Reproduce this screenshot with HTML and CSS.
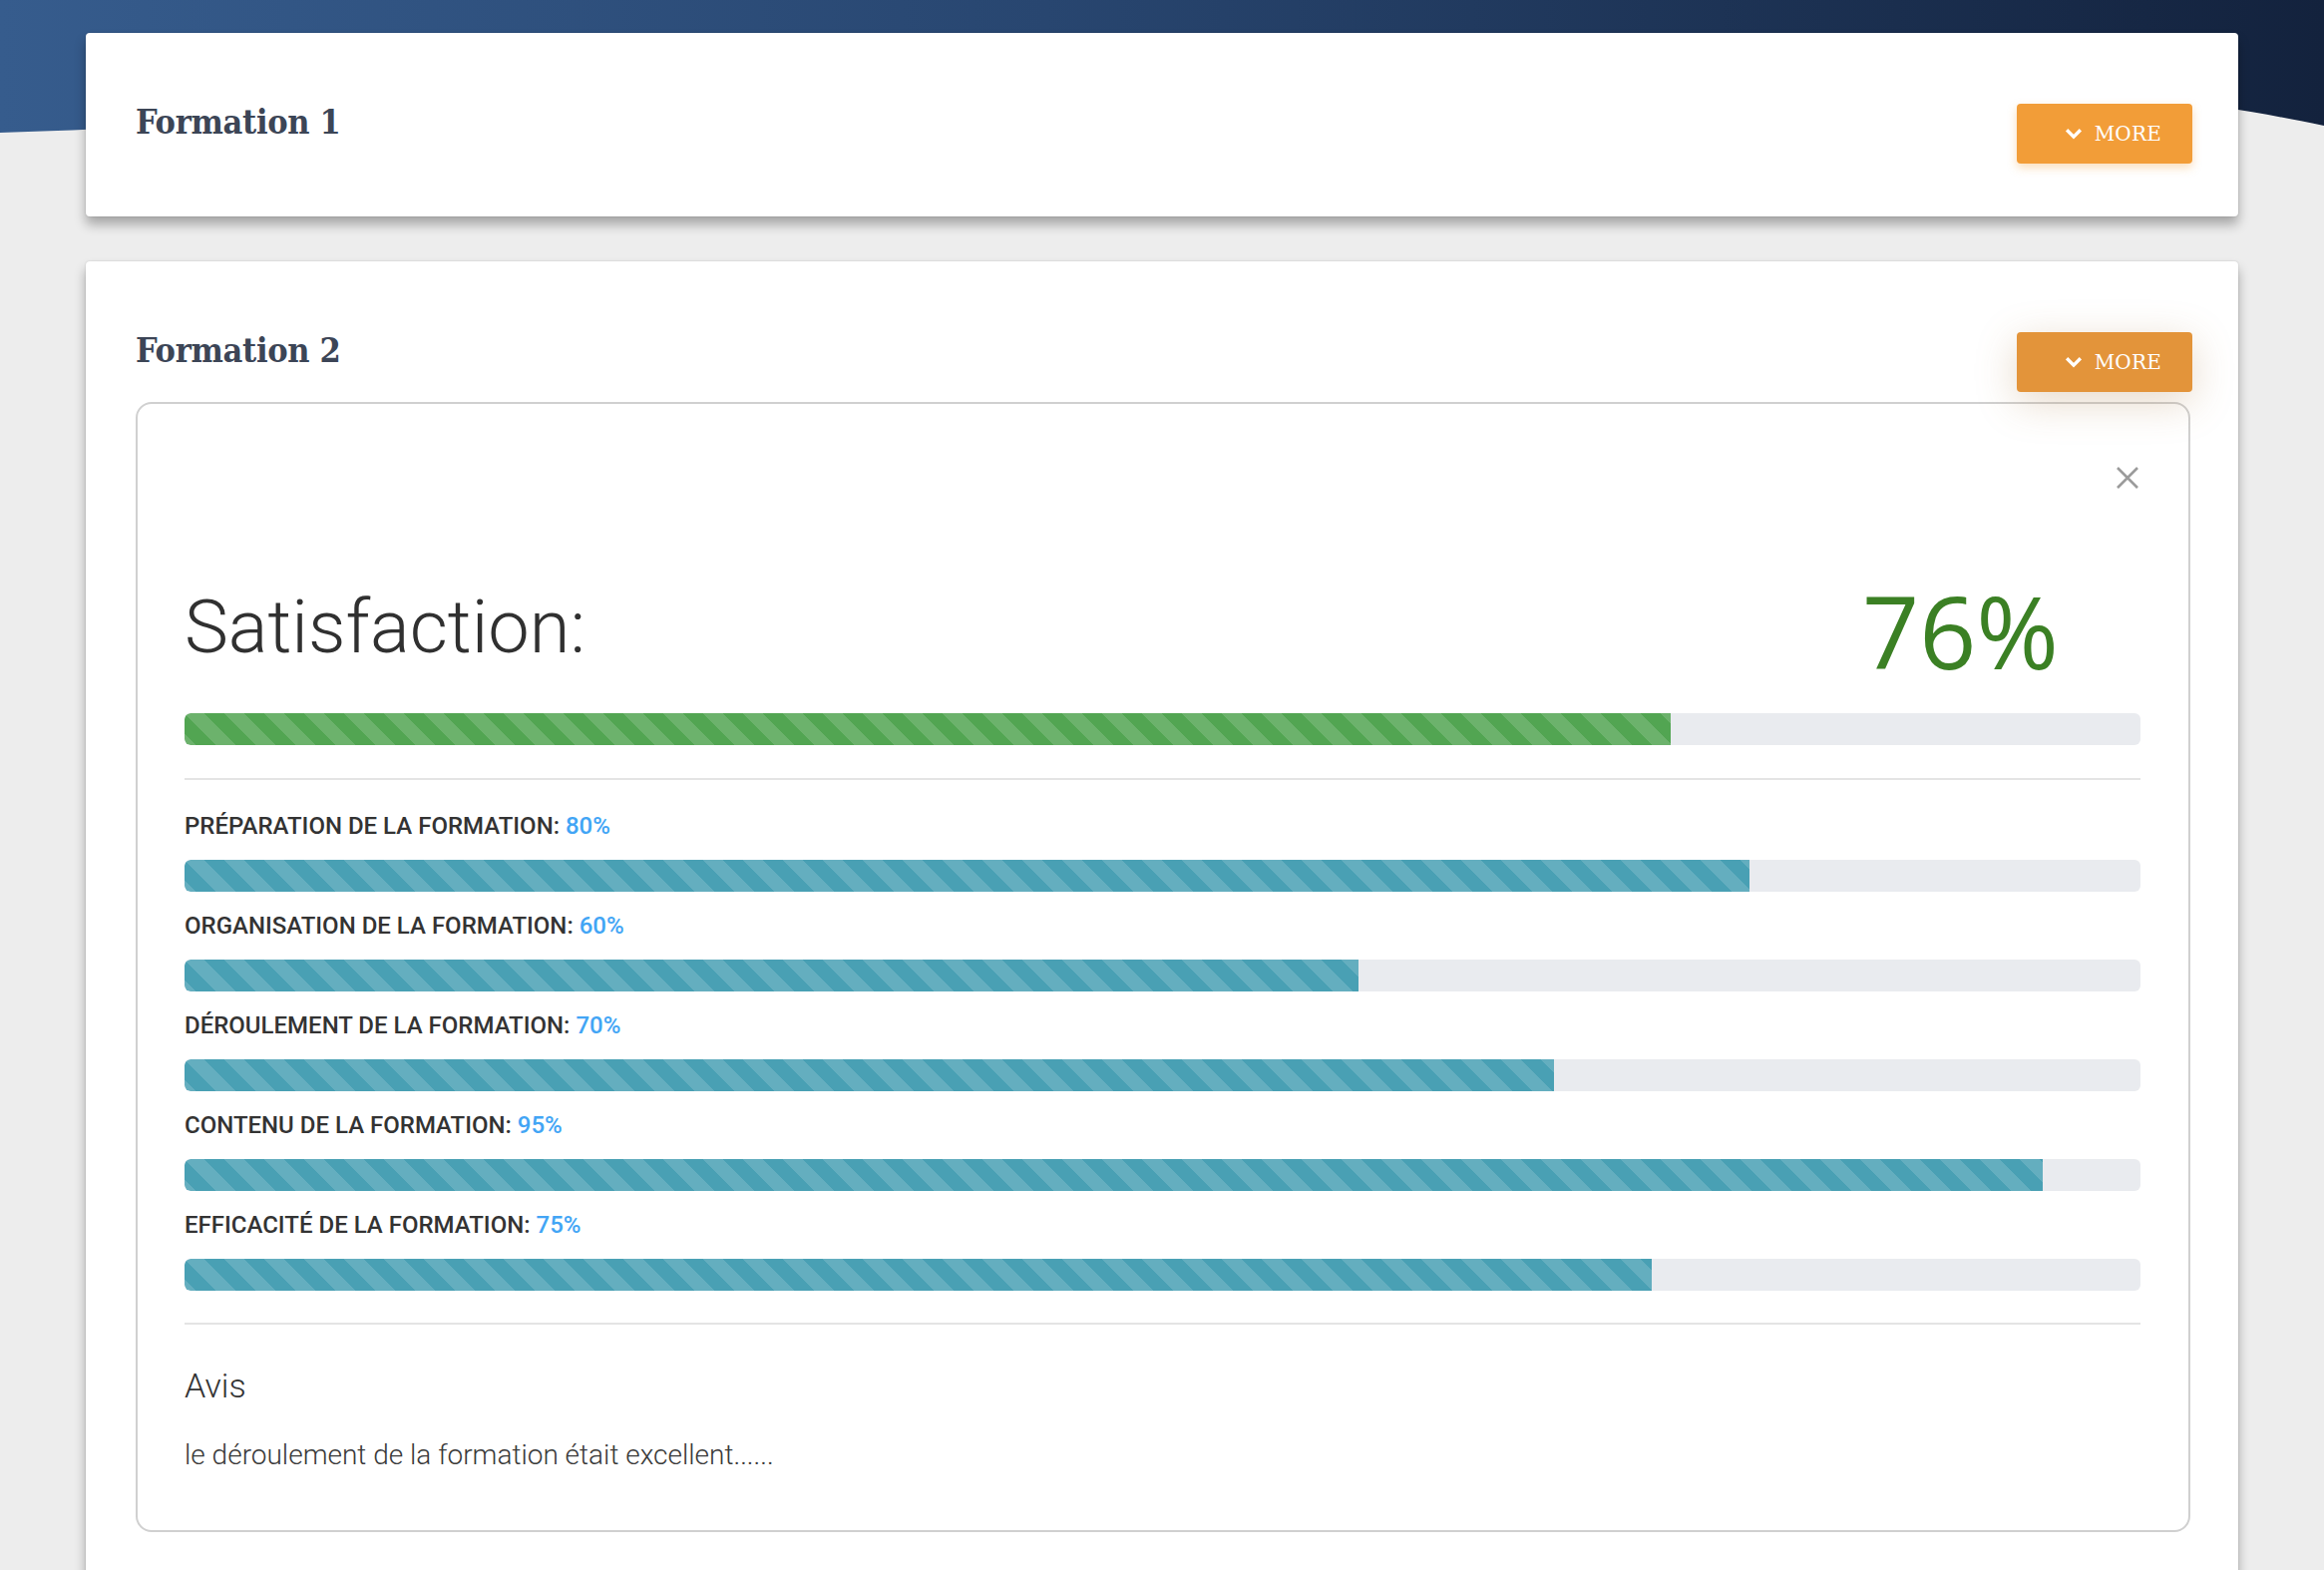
FILE: index.html
```html
<!DOCTYPE html>
<html lang="fr">
<head>
<meta charset="utf-8">
<title>Formations</title>
<link rel="stylesheet" href="styles.css">
</head>
<body>
<div class="hero">
  <svg class="hero-svg" width="2330" height="140" viewBox="0 0 2330 140" preserveAspectRatio="none">
    <defs>
      <linearGradient id="heroGrad" x1="0" y1="0" x2="1" y2="0">
        <stop offset="0" stop-color="#365c8d"/>
        <stop offset="0.45" stop-color="#284670"/>
        <stop offset="1" stop-color="#13223d"/>
      </linearGradient>
    </defs>
    <path d="M0 0 H2330 V126 C2290 118 2260 112 2230 108 C1800 60 1200 70 800 95 C500 112 200 126 0 133 Z" fill="url(#heroGrad)"/>
  </svg>
</div>

<main class="page">
  <section class="card">
    <div class="card-head">
      <h2 class="card-title">Formation 1</h2>
      <button class="more" type="button">
        <svg class="chev" width="30" height="30" viewBox="0 0 24 24"><path d="M6.5 9 L12 14.5 L17.5 9" stroke="#fff" stroke-width="2.6" fill="none"/></svg>
        <span>MORE</span>
      </button>
    </div>
  </section>

  <section class="card">
    <div class="card-head">
      <h2 class="card-title">Formation 2</h2>
      <button class="more more-active" type="button">
        <svg class="chev" width="30" height="30" viewBox="0 0 24 24"><path d="M6.5 9 L12 14.5 L17.5 9" stroke="#fff" stroke-width="2.6" fill="none"/></svg>
        <span>MORE</span>
      </button>
    </div>

    <div class="panel">
      <div class="panel-close">
        <svg width="24" height="24" viewBox="0 0 24 24"><path d="M2 2 L22 22 M22 2 L2 22" stroke="#9b9b9b" stroke-width="2.6" fill="none"/></svg>
      </div>

      <div class="sat-row">
        <span class="sat-label">Satisfaction:</span>
        <span class="sat-value">76%</span>
      </div>
      <div class="bar bar-main"><div class="fill fill-green" style="width:76%"></div></div>

      <hr class="divider">

      <div class="crit-list">
        <div class="crit">
          <div class="crit-label">PRÉPARATION DE LA FORMATION: <span class="pct">80%</span></div>
          <div class="bar"><div class="fill fill-teal" style="width:80%"></div></div>
        </div>
        <div class="crit">
          <div class="crit-label">ORGANISATION DE LA FORMATION: <span class="pct">60%</span></div>
          <div class="bar"><div class="fill fill-teal" style="width:60%"></div></div>
        </div>
        <div class="crit">
          <div class="crit-label">DÉROULEMENT DE LA FORMATION: <span class="pct">70%</span></div>
          <div class="bar"><div class="fill fill-teal" style="width:70%"></div></div>
        </div>
        <div class="crit">
          <div class="crit-label">CONTENU DE LA FORMATION: <span class="pct">95%</span></div>
          <div class="bar"><div class="fill fill-teal" style="width:95%"></div></div>
        </div>
        <div class="crit">
          <div class="crit-label">EFFICACITÉ DE LA FORMATION: <span class="pct">75%</span></div>
          <div class="bar"><div class="fill fill-teal" style="width:75%"></div></div>
        </div>
      </div>

      <hr class="divider divider-bottom">

      <h3 class="avis-title">Avis</h3>
      <p class="avis-text">le déroulement de la formation était excellent......</p>
    </div>
  </section>
</main>
</body>
</html>
```

FILE: styles.css
```css
* { box-sizing: border-box; }

html, body {
  margin: 0;
  padding: 0;
}

body {
  background: #ededed;
  font-family: Roboto, "Liberation Sans", sans-serif;
  color: #333;
  min-height: 1574px;
  position: relative;
  overflow: hidden;
}

.hero {
  position: absolute;
  top: 0;
  left: 0;
  width: 2330px;
  height: 140px;
  z-index: 0;
}

.hero-svg {
  display: block;
}

.page {
  position: relative;
  z-index: 1;
  padding: 33px 86px 0;
  display: flex;
  flex-direction: column;
  gap: 45px;
}

.card {
  background: #fff;
  border-radius: 4px;
  box-shadow: 0 0 2px rgba(0, 0, 0, 0.18), 0 8px 12px rgba(0, 0, 0, 0.3);
  padding: 0 46px 53px 50px;
}

.card-head {
  display: flex;
  justify-content: space-between;
  align-items: flex-start;
  padding-top: 67px;
}

.card-title {
  margin: 0;
  font-family: "DejaVu Serif Condensed", "DejaVu Serif", serif;
  font-stretch: condensed;
  font-weight: bold;
  font-size: 34px;
  line-height: 44px;
  color: #3c4556;
  letter-spacing: -0.3px;
}

.more {
  margin-top: 4px;
  height: 60px;
  width: 176px;
  border: 0;
  border-radius: 4px;
  background: #f29d38;
  color: #fff;
  display: flex;
  align-items: center;
  justify-content: flex-end;
  gap: 6px;
  padding: 0 31px 0 0;
  font-family: "DejaVu Serif", serif;
  font-size: 20px;
  letter-spacing: 0.2px;
  box-shadow: 0 4px 10px rgba(242, 157, 56, 0.35);
  cursor: pointer;
}

.more-active {
  background: #e3943a;
  box-shadow: 0 10px 40px rgba(170, 120, 60, 0.28);
}

.chev {
  display: block;
}

.panel {
  margin-top: 10px;
  margin-right: 2px;
  border: 2px solid #d0d0d0;
  border-radius: 16px;
  padding: 0 48px 58px 47px;
  background: #fff;
}

.panel-close {
  display: flex;
  justify-content: flex-end;
  padding-top: 62px;
  padding-right: 1px;
}

.panel-close svg {
  display: block;
}

.sat-row {
  display: flex;
  justify-content: space-between;
  align-items: flex-start;
  margin-top: 88px;
  padding-right: 82px;
}

.sat-label {
  margin-top: 13px;
  font-family: Roboto, sans-serif;
  font-weight: 300;
  font-size: 74px;
  line-height: 74px;
  color: #303030;
}

.sat-value {
  margin-top: 3px;
  font-family: "Open Sans", "Noto Sans", sans-serif;
  font-weight: 400;
  font-size: 100px;
  line-height: 100px;
  color: #3b8024;
}

.bar {
  height: 32px;
  border-radius: 6px;
  background: #e9ebef;
  overflow: hidden;
}

.bar-main {
  margin-top: 33px;
}

.fill {
  height: 100%;
  border-radius: 6px 0 0 6px;
  background-image: linear-gradient(45deg,
    rgba(255, 255, 255, 0.15) 25%, transparent 25%,
    transparent 50%, rgba(255, 255, 255, 0.15) 50%,
    rgba(255, 255, 255, 0.15) 75%, transparent 75%, transparent);
  background-size: 40px 40px;
}

.fill-green {
  background-color: #52a552;
}

.fill-teal {
  background-color: #49a0b4;
}

.divider {
  margin: 33px 0 0;
  border: 0;
  height: 2px;
  background: #e4e4e4;
}

.crit-list {
  margin-top: 33px;
  display: flex;
  flex-direction: column;
  gap: 21px;
}

.crit {
  display: flex;
  flex-direction: column;
  gap: 21px;
}

.crit-label {
  font-family: Roboto, sans-serif;
  font-weight: 500;
  font-size: 24px;
  line-height: 26px;
  color: #333;
}

.pct {
  color: #42a5f5;
  font-weight: 500;
}

.divider-bottom {
  margin-top: 32px;
}

.avis-title {
  margin: 41px 0 0;
  font-family: Roboto, sans-serif;
  font-weight: 300;
  font-size: 34px;
  line-height: 40px;
  color: #333;
}

.avis-text {
  margin: 33px 0 0;
  font-family: Roboto, sans-serif;
  font-weight: 300;
  font-size: 28px;
  line-height: 34px;
  color: #3a3a3a;
}
```
